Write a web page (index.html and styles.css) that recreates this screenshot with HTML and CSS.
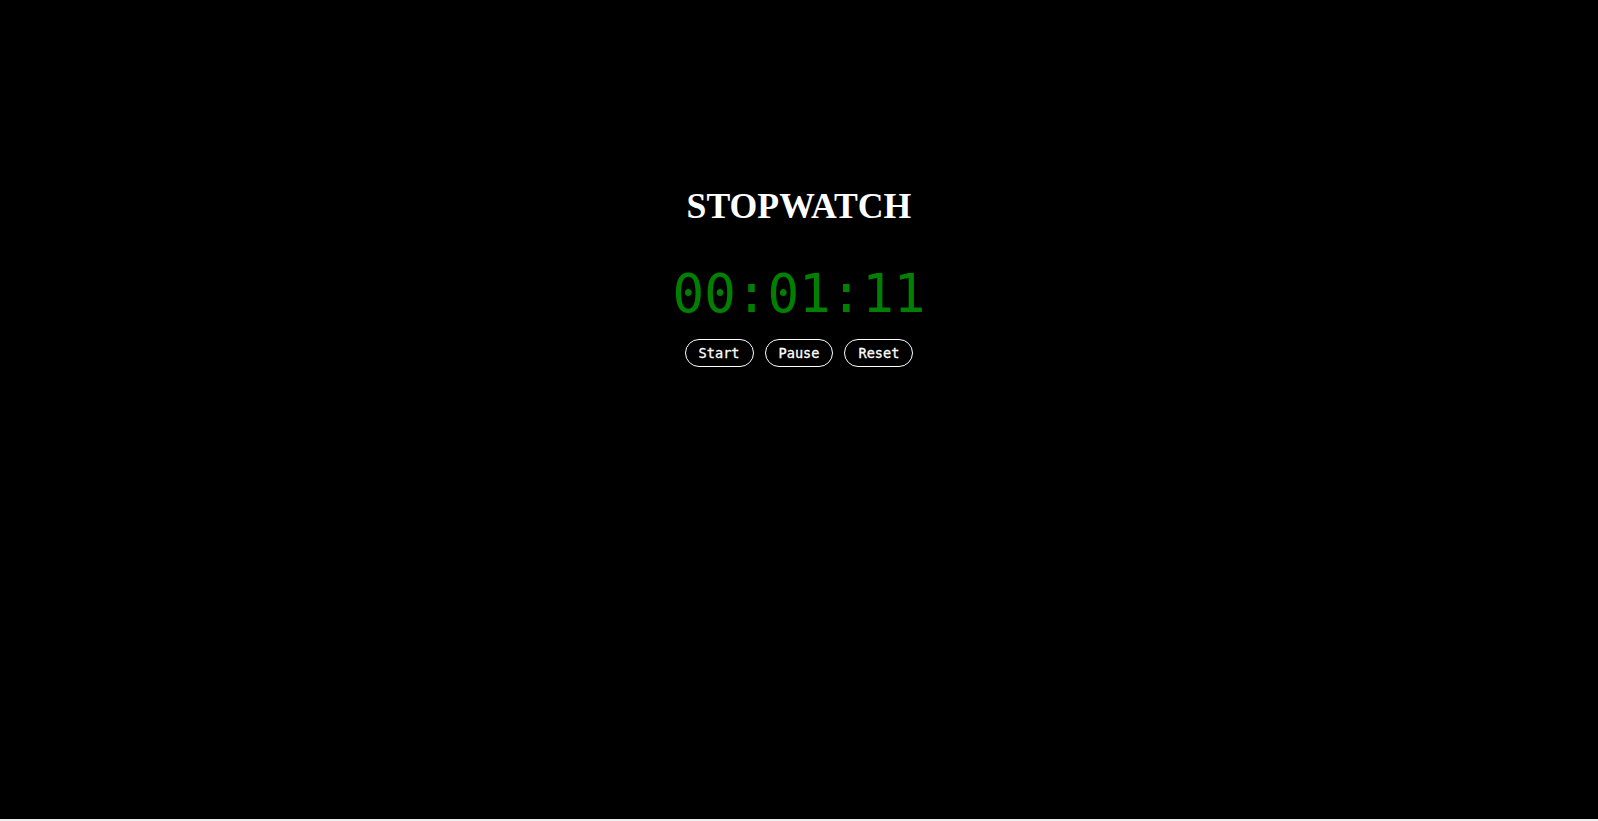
FILE: index.html
```html
<!DOCTYPE html>
<html lang="en">
<head>
<meta charset="utf-8">
<title>Stopwatch</title>
<link rel="stylesheet" href="styles.css">
</head>
<body>
<main class="screen">
  <h1 class="title">STOPWATCH</h1>
  <div class="time">00:01:11</div>
  <div class="controls">
    <button class="btn">Start</button>
    <button class="btn">Pause</button>
    <button class="btn">Reset</button>
  </div>
</main>
</body>
</html>
```
FILE: styles.css
```css
html, body {
  margin: 0;
  padding: 0;
}
body {
  background: #efefef;
}
.screen {
  height: 819px;
  background: #000;
  display: flex;
  flex-direction: column;
  align-items: center;
  padding-top: 186px;
  box-sizing: border-box;
}
.title {
  margin: 0;
  color: #fff;
  font-family: "Liberation Serif", "Times New Roman", serif;
  font-weight: bold;
  font-size: 35.7px;
  line-height: 41px;
}
.time {
  margin-top: 37px;
  color: #008000;
  font-family: "DejaVu Sans Mono", monospace;
  font-size: 52.5px;
  line-height: 60px;
}
.controls {
  margin-top: 15px;
  display: flex;
  gap: 11px;
}
.btn {
  background: transparent;
  color: #fff;
  border: 1px solid #fff;
  border-radius: 14px;
  font-family: "DejaVu Sans Mono", monospace;
  font-size: 13.6px;
  line-height: 17px;
  padding: 5px 13px;
  height: 28px;
  box-sizing: border-box;
  -webkit-text-stroke: 0.3px #fff;
}
```
